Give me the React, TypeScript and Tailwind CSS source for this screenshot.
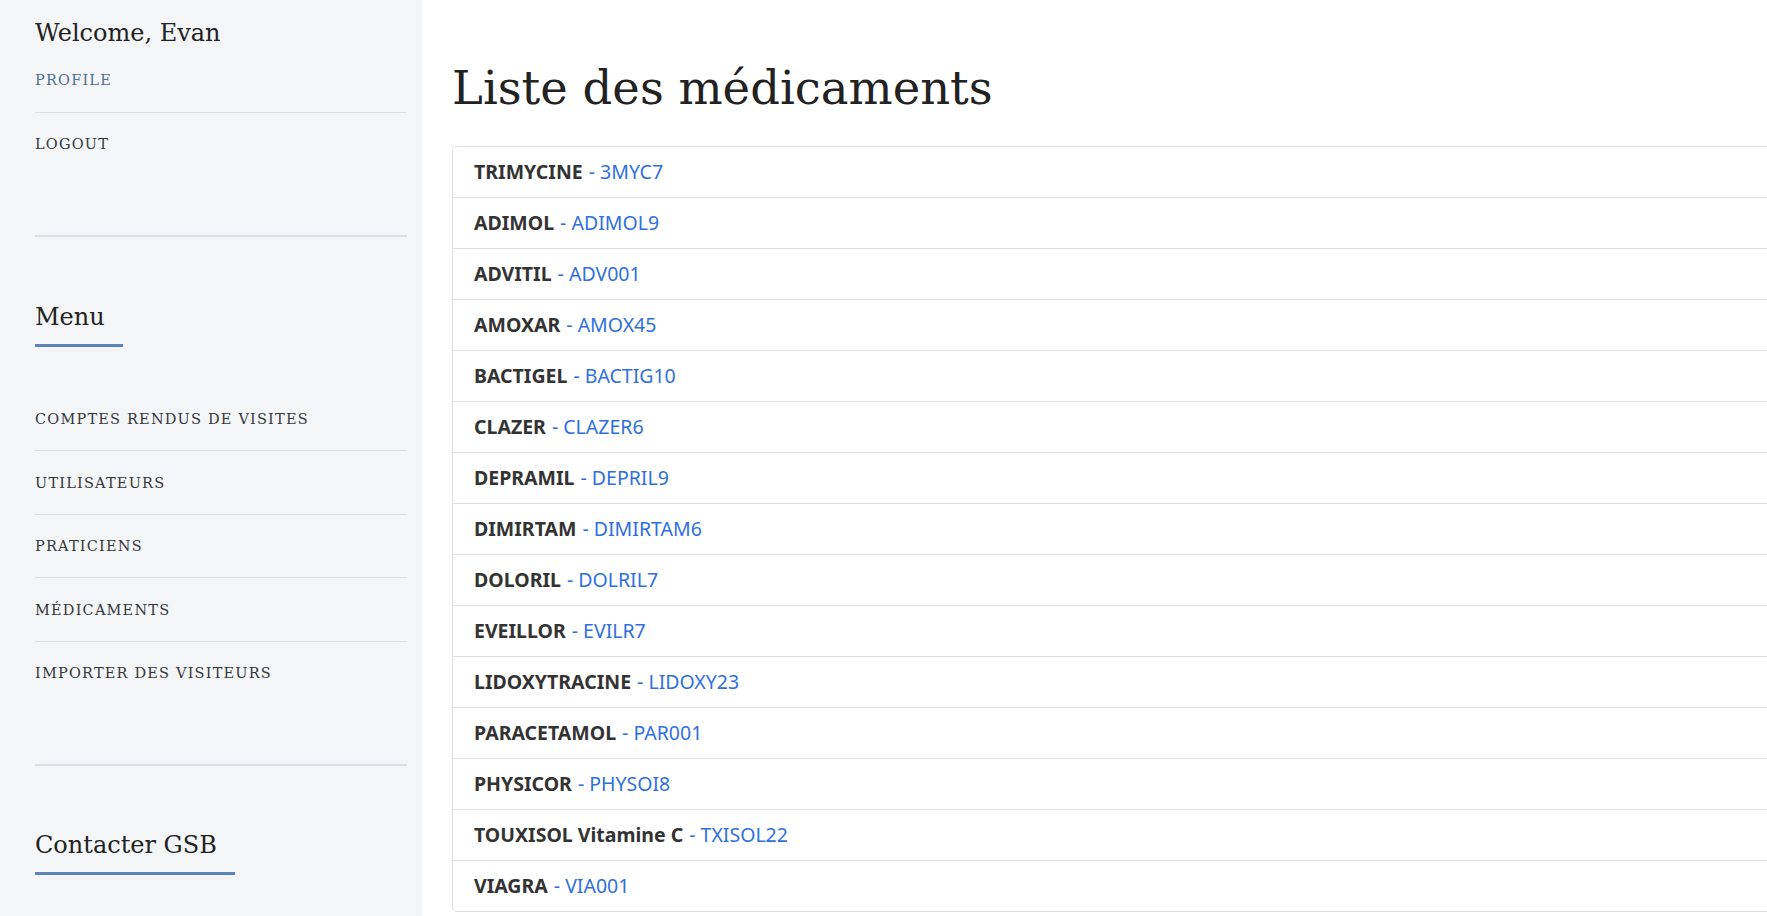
const medicaments = [
  { nom: "TRIMYCINE", code: "3MYC7" },
  { nom: "ADIMOL", code: "ADIMOL9" },
  { nom: "ADVITIL", code: "ADV001" },
  { nom: "AMOXAR", code: "AMOX45" },
  { nom: "BACTIGEL", code: "BACTIG10" },
  { nom: "CLAZER", code: "CLAZER6" },
  { nom: "DEPRAMIL", code: "DEPRIL9" },
  { nom: "DIMIRTAM", code: "DIMIRTAM6" },
  { nom: "DOLORIL", code: "DOLRIL7" },
  { nom: "EVEILLOR", code: "EVILR7" },
  { nom: "LIDOXYTRACINE", code: "LIDOXY23" },
  { nom: "PARACETAMOL", code: "PAR001" },
  { nom: "PHYSICOR", code: "PHYSOI8" },
  { nom: "TOUXISOL Vitamine C", code: "TXISOL22" },
  { nom: "VIAGRA", code: "VIA001" },
];

const menu = [
  "Comptes rendus de visites",
  "Utilisateurs",
  "Praticiens",
  "Médicaments",
  "Importer des visiteurs",
];

const slab = "font-['DejaVu_Serif',serif]";

function SectionTitle({ children }: { children: string }) {
  return (
    <h4
      className={`inline-block self-start pr-[18px] pb-[11px] border-b-[3px] border-[#5a84b7] text-[24px] leading-[32px] text-[#222] ${slab}`}
    >
      {children}
    </h4>
  );
}

export default function App() {
  return (
    <div className="flex h-[916px] w-full overflow-hidden bg-white">
      {/* Sidebar */}
      <aside className={`flex w-[422px] shrink-0 flex-col bg-[#f4f5f7] pl-[35px] pr-[15px] ${slab}`}>
        <p className="pt-[17px] text-[24px] leading-[32px] text-[#222]">Welcome, Evan</p>
        <a className="mt-[21px] pb-[22px] text-[14.5px] leading-[20px] uppercase tracking-[1.2px] text-[#4c7090] border-b border-[#dcdee2]">
          Profile
        </a>
        <a className="mt-[21px] text-[14.5px] leading-[20px] uppercase tracking-[1.2px] text-[#33373c]">
          Logout
        </a>
        <div className="mt-[81px] h-[2px] bg-[#dcdee2]" />

        <div className="mt-[64px] flex flex-col">
          <SectionTitle>Menu</SectionTitle>
        </div>

        <nav className="mt-[62px] flex flex-col">
          {menu.map((item, i) => (
            <a
              key={item}
              className={`text-[14.5px] leading-[20px] uppercase tracking-[1.2px] text-[#33373c] ${
                i < menu.length - 1 ? "pb-[21px] mb-[21.5px] border-b border-[#dcdee2]" : ""
              }`}
            >
              {item}
            </a>
          ))}
        </nav>
        <div className="mt-[81px] h-[2px] bg-[#dcdee2]" />

        <div className="mt-[63px] flex flex-col">
          <SectionTitle>Contacter GSB</SectionTitle>
        </div>
      </aside>

      {/* Main */}
      <main className="flex-1 overflow-hidden pl-[30px] pt-[60px]">
        <h1 className={`text-[46.5px] leading-[56px] text-[#222] ${slab}`}>Liste des médicaments</h1>

        <ul className="mt-[30px] w-[1500px] rounded-[5px] border border-[#dfdfdf] font-['Noto_Sans',sans-serif] text-[19.5px]">
          {medicaments.map((m, i) => (
            <li
              key={m.code}
              className={`flex items-center pl-[21px] ${i > 0 ? "h-[51px] border-t border-[#dfdfdf]" : "h-[50px]"}`}
            >
              <span className="font-bold text-[#333]">{m.nom}</span>
              <span className="ml-[6px] text-[#2f6fe0]">- {m.code}</span>
            </li>
          ))}
        </ul>
      </main>
    </div>
  );
}
